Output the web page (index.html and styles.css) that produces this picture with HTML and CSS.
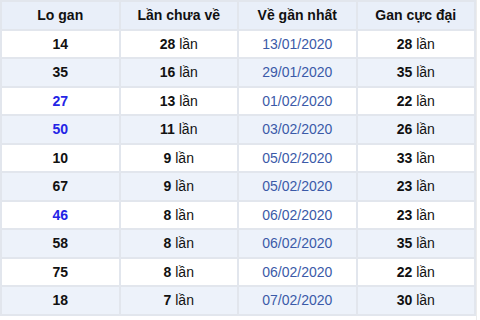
FILE: index.html
```html
<!DOCTYPE html>
<html lang="vi">
<head>
  <meta charset="UTF-8">
  <title>Lo gan</title>
  <link rel="stylesheet" href="styles.css">
</head>
<body>
  <div class="wrap">
    <table class="gan-table">
      <thead>
        <tr>
          <th>Lo gan</th>
          <th>Lần chưa về</th>
          <th>Về gần nhất</th>
          <th>Gan cực đại</th>
        </tr>
      </thead>
      <tbody>
        <tr><td class="num">14</td><td><b>28</b> lần</td><td class="date">13/01/2020</td><td><b>28</b> lần</td></tr>
        <tr><td class="num">35</td><td><b>16</b> lần</td><td class="date">29/01/2020</td><td><b>35</b> lần</td></tr>
        <tr><td class="num hot">27</td><td><b>13</b> lần</td><td class="date">01/02/2020</td><td><b>22</b> lần</td></tr>
        <tr><td class="num hot">50</td><td><b>11</b> lần</td><td class="date">03/02/2020</td><td><b>26</b> lần</td></tr>
        <tr><td class="num">10</td><td><b>9</b> lần</td><td class="date">05/02/2020</td><td><b>33</b> lần</td></tr>
        <tr><td class="num">67</td><td><b>9</b> lần</td><td class="date">05/02/2020</td><td><b>23</b> lần</td></tr>
        <tr><td class="num hot">46</td><td><b>8</b> lần</td><td class="date">06/02/2020</td><td><b>23</b> lần</td></tr>
        <tr><td class="num">58</td><td><b>8</b> lần</td><td class="date">06/02/2020</td><td><b>35</b> lần</td></tr>
        <tr><td class="num">75</td><td><b>8</b> lần</td><td class="date">06/02/2020</td><td><b>22</b> lần</td></tr>
        <tr><td class="num">18</td><td><b>7</b> lần</td><td class="date">07/02/2020</td><td><b>30</b> lần</td></tr>
      </tbody>
    </table>
  </div>
</body>
</html>
```
FILE: styles.css
```css
body {
  margin: 0;
  padding: 0;
  background-color: #ffffff;
  font-family: "Liberation Sans", Arial, sans-serif;
  font-size: 14px;
  color: #111111;
}

.wrap {
  width: 477px;
  height: 320px;
  border-right: 1px solid #ececec;
  box-sizing: border-box;
}

.gan-table {
  width: 476px;
  border-collapse: collapse;
  table-layout: fixed;
  border: 2px solid #e2e6ed;
}

.gan-table th,
.gan-table td {
  height: 26.5px;
  padding: 0;
  text-align: center;
  vertical-align: middle;
  border: 2px solid #e2e6ed;
}

.gan-table th {
  background-color: #e9eff9;
  font-weight: bold;
  color: #111111;
}

.gan-table tbody tr:nth-child(even) td {
  background-color: #edf2fa;
}

.gan-table b,
.num {
  font-weight: bold;
}

.hot {
  color: #2424e6;
}

.date {
  color: #3b5aa8;
}
```
